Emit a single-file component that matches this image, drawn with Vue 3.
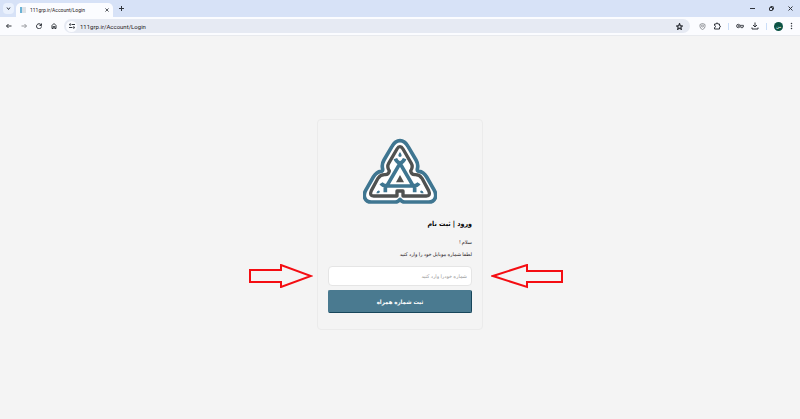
<script setup>
import { ref } from 'vue'

const endereco = ref('111grp.ir/Account/Login')
const celular = ref('')
</script>

<template>
  <div class="janela">
    <header>
      <div class="abas">
        <button class="lista" aria-label="Search tabs">
          <svg width="5" height="5" viewBox="0 0 10 10"><path d="M2 3l3 4 3-4" /></svg>
        </button>
        <div class="aba">
          <span class="favicon"></span>
          <span class="aba-titulo">{{ endereco }}</span>
          <button aria-label="Close">
            <svg width="4" height="4" viewBox="0 0 10 10"><path d="M1 1l8 8M9 1l-8 8" /></svg>
          </button>
        </div>
        <button class="nova" aria-label="New tab">
          <svg width="5" height="5" viewBox="0 0 10 10"><path d="M5 0v10M0 5h10" /></svg>
        </button>
        <div class="controles">
          <button aria-label="Minimize">
            <svg width="5" height="5" viewBox="0 0 10 10"><path d="M0 5h10" /></svg>
          </button>
          <button aria-label="Restore">
            <svg width="5" height="5" viewBox="0 0 10 10"><rect x="1" y="3" width="6" height="6" rx="1" /><path d="M3 1h4q2 0 2 2v4" /></svg>
          </button>
          <button aria-label="Close window">
            <svg width="5" height="5" viewBox="0 0 10 10"><path d="M1 1l8 8M9 1l-8 8" /></svg>
          </button>
        </div>
      </div>

      <div class="barra">
        <button aria-label="Back">
          <svg width="6" height="6" viewBox="0 0 12 12"><path d="M11 6H1M5 2L1 6l4 4" /></svg>
        </button>
        <button class="apagado" aria-label="Forward">
          <svg width="6" height="6" viewBox="0 0 12 12"><path d="M1 6h10M7 2l4 4-4 4" /></svg>
        </button>
        <button aria-label="Reload">
          <svg width="6" height="6" viewBox="0 0 12 12"><path d="M10 3.500A5 5 0 1 0 11 7M11 1v4H7" /></svg>
        </button>
        <button aria-label="Home">
          <svg width="6" height="6" viewBox="0 0 12 12"><path d="M2 11V5l4-4 4 4v6H7.500V7h-3v4z" /></svg>
        </button>
        <div class="url">
          <button class="site" aria-label="Site information">
            <svg width="6" height="6" viewBox="0 0 12 12"><path d="M6 3h6M0 9h6" /><circle cx="2.500" cy="3" r="1.500" /><circle cx="9.500" cy="9" r="1.500" /></svg>
          </button>
          <input v-model="endereco" type="text" aria-label="Address" />
          <button aria-label="Bookmark">
            <svg width="7" height="7" viewBox="0 0 12 12"><path d="M6 1l1.500 3.500 3.500.5-2.700 2.300.9 3.700L6 9l-3.200 2 .9-3.700L1 5l3.500-.5z" /></svg>
          </button>
        </div>
        <div class="extensoes">
          <button class="apagado" aria-label="Protection">
            <svg width="7" height="7" viewBox="0 0 14 14"><path d="M7 1l5 2v4q0 4-5 6-5-2-5-6V3z" /><circle cx="7" cy="6" r="2" /></svg>
          </button>
          <button aria-label="Extensions">
            <svg width="8" height="8" viewBox="0 0 16 16"><path d="M3 4h3.500q0-2.500 1.500-2.500T9.500 4H13v3.500q2 0 2 1.500t-2 1.500V14H3v-3q2 0 2-2T3 7z" /></svg>
          </button>
          <i></i>
          <button aria-label="Passwords">
            <svg width="8" height="6" viewBox="0 0 18 14"><circle cx="5" cy="7" r="4" /><circle cx="5" cy="7" r="1" /><path d="M9 5.500h8V9h-2v2h-3V9H9" /></svg>
          </button>
          <button aria-label="Downloads">
            <svg width="8" height="8" viewBox="0 0 16 16"><path d="M8 1v9M4 6l4 4 4-4M2 11v3h12v-3" /></svg>
          </button>
          <i></i>
          <button class="perfil" aria-label="Profile">من</button>
          <button aria-label="Menu">
            <svg width="3" height="8" viewBox="0 0 6 16"><path class="pontos" d="M3 3v.01M3 8v.01M3 13v.01" /></svg>
          </button>
        </div>
      </div>
    </header>

    <main>
      <form class="cartao" dir="rtl" @submit.prevent>
        <svg class="logo" viewBox="25 22 222 200">
          <path class="azul" d="M136 30C123 30 117 38 112 47L88 88C81 100 82 108 84 115Q85 121 79 122C69 123 62 129 56 139L33 179C24 195 30 214 50 214H122Q130 214 136 206Q142 214 150 214H222C242 214 248 195 239 179L216 139C210 129 203 123 193 122Q187 121 188 115C190 108 191 100 184 88L160 47C155 38 149 30 136 30Z" />
          <path class="cinza" d="M136 48Q131 48 127 55L102 98Q96 108 104 121Q102 133 90 132Q77 132 70 143L50 180Q43 196 57 196H127V181H145V196H215Q229 196 222 180L202 143Q195 132 182 132Q170 133 168 121Q176 108 170 98L145 55Q141 48 136 48Z" />
          <g class="letra">
            <path d="M136 98L97 165M136 98L175 165M92 166H180M122 84Q125 93 136 98Q147 93 150 84" />
            <path d="M79 158Q84 166 98 166M193 158Q188 166 174 166M92 166V185M180 166V185" />
          </g>
          <path class="gota" d="M136 64Q126 77 136 79Q146 77 136 64ZM65 188Q67 178 74 180Q80 187 65 188ZM207 188Q205 178 198 180Q192 187 207 188Z" />
          <path class="miolo" d="M136 133L124 155H148Z" />
        </svg>

        <h1>ورود | ثبت نام</h1>
        <p>سلام !</p>
        <p><label for="celular">لطفا شماره موبایل خود را وارد کنید</label></p>

        <div class="campo">
          <svg class="seta esquerda" width="64" height="24" viewBox="0 0 64 24"><path d="M1 6h31V1l30 11-30 11v-5H1z" /></svg>
          <input id="celular" v-model="celular" type="tel" placeholder="شماره خودرا وارد کنید" />
          <svg class="seta direita" width="72" height="25" viewBox="0 0 72 25"><path d="M71 7H36V1L2 12l34 11v-5h35z" /></svg>
        </div>
        <button class="enviar" type="submit">ثبت شماره همراه</button>
      </form>
    </main>
  </div>
</template>

<style>
body {
  margin: 0;
  background: #f4f4f4;
}
</style>

<style scoped>
.janela {
  min-height: 100vh;
  font-family: Roboto, 'DejaVu Sans', sans-serif;
  color: #1f2023;
}

button {
  display: flex;
  align-items: center;
  justify-content: center;
  flex-shrink: 0;
  padding: 0;
  border: none;
  background: none;
  color: inherit;
  font-family: inherit;
}

header svg {
  display: block;
  fill: none;
  stroke: #30343b;
  stroke-width: 2;
}

.abas {
  display: flex;
  align-items: center;
  height: 17px;
  padding: 0 7px 0 3px;
  background: #d7e2f7;
}

.lista {
  width: 11px;
  height: 11px;
  border-radius: 4px;
  background: #eaf1fd;
}

.aba {
  display: flex;
  align-items: center;
  align-self: flex-end;
  box-sizing: border-box;
  width: 97px;
  height: 14px;
  margin-left: 2px;
  padding: 0 4px;
  border-radius: 5px 5px 0 0;
  background: #fbfcff;
  font-size: 5px;
}

.favicon {
  box-sizing: border-box;
  width: 6px;
  height: 6px;
  margin-right: 4px;
  border-left: 2px solid #69b2d5;
  background: #dde1e6;
}

.aba-titulo {
  flex: 1;
}

.nova {
  margin-left: 6px;
}

.controles {
  display: flex;
  gap: 14px;
  margin-left: auto;
}

.barra {
  display: flex;
  align-items: center;
  gap: 9px;
  height: 18px;
  padding: 0 7px 0 6px;
  border-bottom: 1px solid #e8eaee;
  background: #fbfcff;
}

.apagado {
  opacity: 0.5;
}

.url {
  display: flex;
  flex: 1;
  align-items: center;
  height: 14px;
  margin-left: -2px;
  padding: 0 7px 0 2px;
  border-radius: 7px;
  background: #e6eaf3;
}

.url input {
  flex: 1;
  min-width: 0;
  padding: 0 3px;
  border: none;
  outline: none;
  background: none;
  color: inherit;
  font-family: inherit;
  font-size: 6px;
}

.site {
  width: 11px;
  height: 11px;
  border-radius: 50%;
  background: #fbfcff;
}

.extensoes {
  display: flex;
  align-items: center;
  gap: 7px;
}

.extensoes i {
  width: 1px;
  height: 7px;
  background: #c9ddf8;
}

.perfil {
  width: 9px;
  height: 9px;
  border-radius: 50%;
  background: #0b5345;
  color: #fff;
  font-size: 4px;
}

.pontos {
  stroke-linecap: round;
  stroke-width: 3;
}

main {
  display: flex;
  justify-content: center;
  padding-top: 83px;
}

.cartao {
  display: flex;
  flex-direction: column;
  box-sizing: border-box;
  width: 166px;
  padding: 18px 10px 16px;
  border: 1px solid #ebebeb;
  border-radius: 4px;
}

.logo {
  align-self: center;
  width: 74px;
  margin-bottom: 13px;
}

.azul,
.cinza {
  fill: #fff;
  stroke: #3f7691;
  stroke-width: 11;
  stroke-linejoin: round;
}

.cinza {
  stroke: #505251;
  stroke-width: 10;
}

.letra {
  fill: none;
  stroke: #3f7691;
  stroke-width: 11;
}

.gota {
  fill: #3f7691;
}

.miolo {
  fill: #505251;
}

h1 {
  margin: 0 0 6px;
  color: #000;
  font-family: 'DejaVu Sans Condensed', 'DejaVu Sans', sans-serif;
  font-size: 7px;
  line-height: 12px;
}

p {
  margin: 0;
  font-size: 5px;
  line-height: 12px;
}

.campo {
  position: relative;
  margin-top: 6px;
}

.campo input {
  display: block;
  box-sizing: border-box;
  width: 100%;
  height: 20px;
  padding: 0 4px;
  border: 1px solid #e5e5e5;
  border-radius: 4px;
  outline: none;
  background: #fff;
  font-family: inherit;
  font-size: 5px;
  text-align: right;
}

.campo input::placeholder {
  color: #999;
  opacity: 1;
}

.seta {
  position: absolute;
  top: -2px;
  fill: none;
  stroke: #f40d12;
  stroke-width: 2;
}

.esquerda {
  right: calc(100% + 15px);
}

.direita {
  left: calc(100% + 19px);
}

.enviar {
  height: 23px;
  margin-top: 4px;
  border: 1px solid #4a7a90;
  border-right-color: #17465b;
  border-bottom-color: #17465b;
  border-radius: 2px;
  background: #4a7a90;
  color: #fff;
  font-family: 'DejaVu Sans Condensed', 'DejaVu Sans', sans-serif;
  font-size: 6px;
  font-weight: bold;
}
</style>
